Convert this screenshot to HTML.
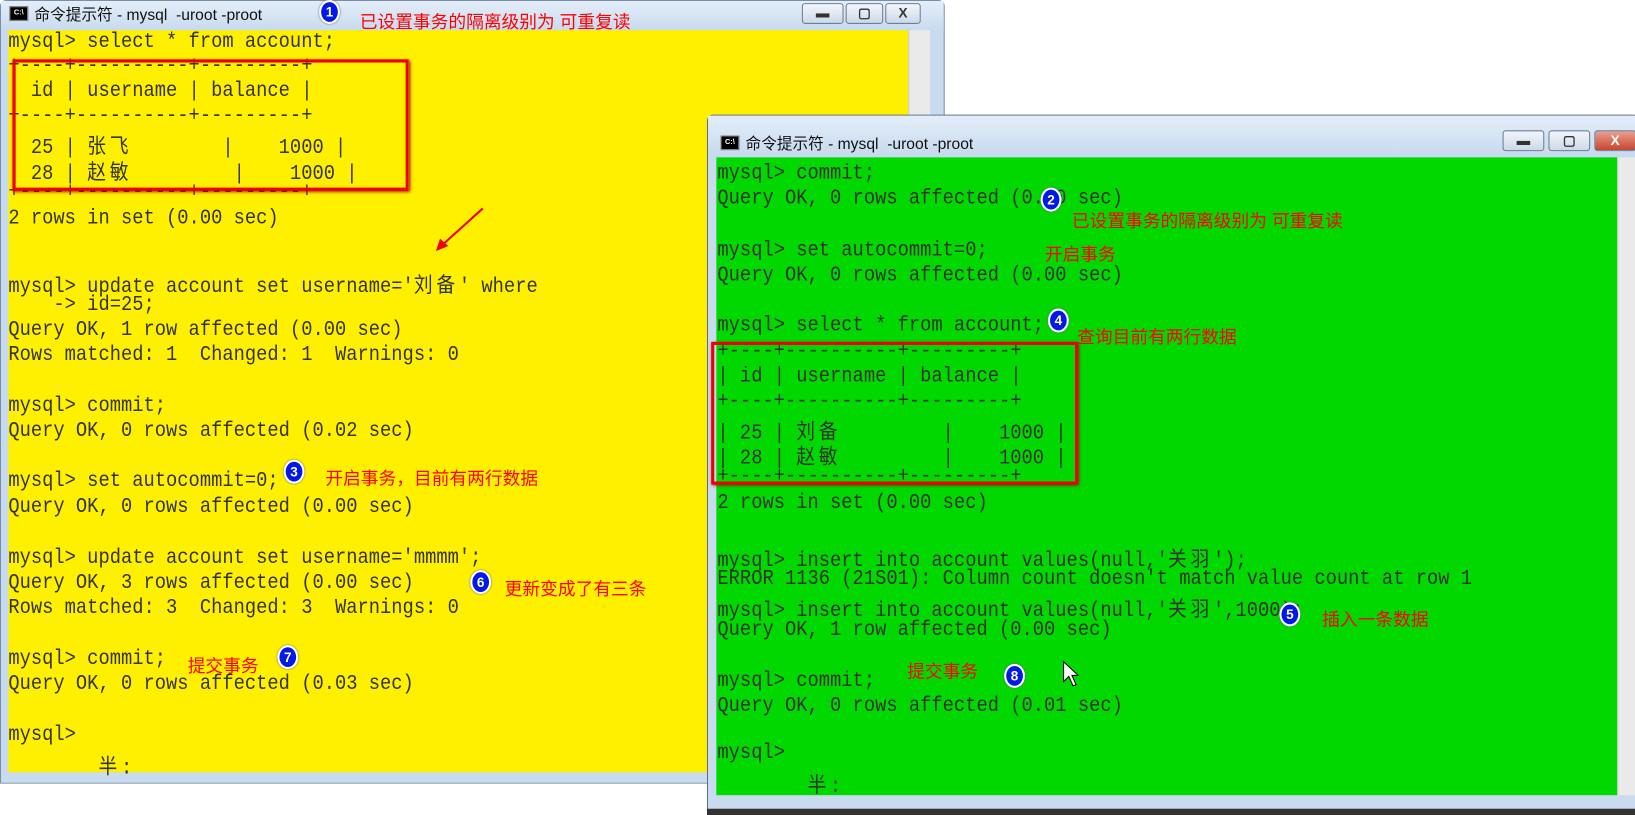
<!DOCTYPE html>
<html><head><meta charset="utf-8"><style>
html,body{margin:0;padding:0;background:#fff;width:1635px;height:815px;overflow:hidden}
#s{position:absolute;left:0;top:0;width:1568px;height:782px;transform-origin:0 0;transform:scale(1.04273,1.0422)}
.win{position:absolute;background:#c9dcef;border:1px solid #7a8ea5;border-radius:6px 6px 0 0;box-sizing:border-box}
.tb{position:absolute;left:0;right:0;top:0;height:30px;background:linear-gradient(#e4eef9,#c6d9ee)}
.ttl{position:absolute;font:15px "Liberation Sans","Noto Sans CJK SC",sans-serif;color:#111;white-space:pre}
.ico{position:absolute;width:16px;height:12px;background:#000;border:1px solid #888;color:#fff;font:bold 7px "Liberation Sans",sans-serif;line-height:12px;text-align:center}
.btn{position:absolute;height:20px;border:1px solid #6d7f96;border-radius:3px;background:linear-gradient(#f2f6fb,#cdd9e8);box-sizing:border-box;text-align:center;font:bold 13px "Liberation Sans",sans-serif;color:#333;line-height:18px}
.btn.x{background:linear-gradient(#e8a090,#c8452e);color:#fff}
.con{position:absolute;overflow:hidden}
.l{position:absolute;margin-top:3px;height:24px;line-height:24px;font:18px "Liberation Mono","Noto Sans CJK SC",monospace;color:#34342c;white-space:pre;transform:scaleY(1.12)}
.c{letter-spacing:3.6px}
.sb{position:absolute;background:#eaeaea;border-left:1px solid #ccc}
.r{position:absolute;font:17px "Liberation Sans","Noto Sans CJK SC",sans-serif;color:#f00;white-space:pre;line-height:20px}
.n{position:absolute;width:16px;height:19px;border-radius:50%;background:#0018e8;border:2px solid #fff;box-shadow:0 0 2px #666;color:#fff;font:bold 13px "Liberation Sans",sans-serif;text-align:center;line-height:19px}
.box{position:absolute;border:3px solid #e00;box-shadow:1px 1px 3px #900}
</style></head><body><div id="s">

<div class="win" style="left:0;top:0;width:906px;height:752px">
 <div class="tb"></div>
 <div class="ico" style="left:8px;top:5px">C:\</div>
 <div class="ttl" style="left:32px;top:2px">命令提示符 - mysql  -uroot -proot</div>
 <div class="btn" style="left:768px;top:2px;width:40px">▬</div>
 <div class="btn" style="left:810px;top:2px;width:36px">▢</div>
 <div class="btn" style="left:848px;top:2px;width:34px">X</div>
 <div class="con" style="left:7px;top:28px;width:863px;height:712px;background:#fff000"></div>
 <div class="sb" style="left:870px;top:28px;width:20px;height:712px"></div>
</div>
<div style="position:absolute;left:0;top:752px;width:680px;height:30px;background:#fff"></div>

<div class="l" style="left:8px;top:28px">mysql&gt; select * from account;</div>
<div class="l" style="left:8px;top:51px">+----+----------+---------+</div>
<div class="l" style="left:8px;top:75px">| id | username | balance |</div>
<div class="l" style="left:8px;top:99px">+----+----------+---------+</div>
<div class="l" style="left:8px;top:123px">| 25 | <span class="c">张飞</span>        |    1000 |</div>
<div class="l" style="left:8px;top:148px">| 28 | <span class="c">赵敏</span>         |    1000 |</div>
<div class="l" style="left:8px;top:172px">+----+----------+---------+</div>
<div class="l" style="left:8px;top:197px">2 rows in set (0.00 sec)</div>
<div class="l" style="left:8px;top:256px">mysql&gt; update account set username='<span class="c">刘备</span>' where</div>
<div class="l" style="left:8px;top:280px">    -&gt; id=25;</div>
<div class="l" style="left:8px;top:304px">Query OK, 1 row affected (0.00 sec)</div>
<div class="l" style="left:8px;top:328px">Rows matched: 1  Changed: 1  Warnings: 0</div>
<div class="l" style="left:8px;top:377px">mysql&gt; commit;</div>
<div class="l" style="left:8px;top:401px">Query OK, 0 rows affected (0.02 sec)</div>
<div class="l" style="left:8px;top:449px">mysql&gt; set autocommit=0;</div>
<div class="l" style="left:8px;top:474px">Query OK, 0 rows affected (0.00 sec)</div>
<div class="l" style="left:8px;top:523px">mysql&gt; update account set username='mmmm';</div>
<div class="l" style="left:8px;top:547px">Query OK, 3 rows affected (0.00 sec)</div>
<div class="l" style="left:8px;top:571px">Rows matched: 3  Changed: 3  Warnings: 0</div>
<div class="l" style="left:8px;top:620px">mysql&gt; commit;</div>
<div class="l" style="left:8px;top:644px">Query OK, 0 rows affected (0.03 sec)</div>
<div class="l" style="left:8px;top:693px">mysql&gt;</div>
<div class="l" style="left:8px;top:718px">        <span class="c">半</span>:</div>

<div class="box" style="left:12px;top:57px;width:374px;height:120px"></div>
<svg style="position:absolute;left:410px;top:195px" width="60" height="50"><line x1="53" y1="5" x2="12" y2="42" stroke="#e00" stroke-width="2"/><polygon points="8,46 12,34 20,41" fill="#e00"/></svg>

<div class="r" style="left:345px;top:12px">已设置事务的隔离级别为 可重复读</div>
<div class="n" style="left:306px;top:0px">1</div>
<div class="n" style="left:272px;top:441px">3</div>
<div class="r" style="left:312px;top:450px">开启事务，目前有两行数据</div>
<div class="n" style="left:451px;top:547px">6</div>
<div class="r" style="left:484px;top:556px">更新变成了有三条</div>
<div class="n" style="left:266px;top:619px">7</div>
<div class="r" style="left:180px;top:630px">提交事务</div>

<div class="win" style="left:678px;top:110px;width:895px;height:668px;border-color:#5c6f86">
 <div class="tb" style="height:40px"></div>
 <div class="ico" style="left:12px;top:19px">C:\</div>
 <div class="ttl" style="left:36px;top:16px">命令提示符 - mysql  -uroot -proot</div>
 <div class="btn" style="left:762px;top:14px;width:40px">▬</div>
 <div class="btn" style="left:806px;top:14px;width:40px">▢</div>
 <div class="btn x" style="left:850px;top:14px;width:40px">X</div>
 <div class="con" style="left:8px;top:40px;width:864px;height:612px;background:#00d800"></div>
 <div class="sb" style="left:872px;top:40px;width:20px;height:612px"></div>
</div>
<div style="position:absolute;left:678px;top:776px;width:890px;height:6px;background:#333"></div>

<div class="l" style="left:688px;top:154px">mysql&gt; commit;</div>
<div class="l" style="left:688px;top:178px">Query OK, 0 rows affected (0.00 sec)</div>
<div class="l" style="left:688px;top:228px">mysql&gt; set autocommit=0;</div>
<div class="l" style="left:688px;top:252px">Query OK, 0 rows affected (0.00 sec)</div>
<div class="l" style="left:688px;top:300px">mysql&gt; select * from account;</div>
<div class="l" style="left:688px;top:325px">+----+----------+---------+</div>
<div class="l" style="left:688px;top:349px">| id | username | balance |</div>
<div class="l" style="left:688px;top:373px">+----+----------+---------+</div>
<div class="l" style="left:688px;top:397px">| 25 | <span class="c">刘备</span>         |    1000 |</div>
<div class="l" style="left:688px;top:421px">| 28 | <span class="c">赵敏</span>         |    1000 |</div>
<div class="l" style="left:688px;top:445px">+----+----------+---------+</div>
<div class="l" style="left:688px;top:470px">2 rows in set (0.00 sec)</div>
<div class="l" style="left:688px;top:519px">mysql&gt; insert into account values(null,'<span class="c">关羽</span>');</div>
<div class="l" style="left:688px;top:543px">ERROR 1136 (21S01): Column count doesn't match value count at row 1</div>
<div class="l" style="left:688px;top:567px">mysql&gt; insert into account values(null,'<span class="c">关羽</span>',1000);</div>
<div class="l" style="left:688px;top:592px">Query OK, 1 row affected (0.00 sec)</div>
<div class="l" style="left:688px;top:641px">mysql&gt; commit;</div>
<div class="l" style="left:688px;top:665px">Query OK, 0 rows affected (0.01 sec)</div>
<div class="l" style="left:688px;top:710px">mysql&gt;</div>
<div class="l" style="left:688px;top:736px">        <span class="c">半</span>:</div>

<div class="box" style="left:682px;top:328px;width:346px;height:131px"></div>

<div class="n" style="left:998px;top:180px">2</div>
<div class="r" style="left:1028px;top:203px">已设置事务的隔离级别为 可重复读</div>
<div class="r" style="left:1002px;top:235px">开启事务</div>
<div class="n" style="left:1005px;top:296px">4</div>
<div class="r" style="left:1033px;top:314px">查询目前有两行数据</div>
<div class="n" style="left:1227px;top:578px">5</div>
<div class="r" style="left:1268px;top:585px">插入一条数据</div>
<div class="r" style="left:870px;top:635px">提交事务</div>
<div class="n" style="left:963px;top:637px">8</div>
<svg style="position:absolute;left:1019px;top:634px" width="16" height="26"><polygon points="1,1 1,20 6,15 10,24 13,23 9,14 15,14" fill="#fff" stroke="#000"/></svg>
</div></body></html>
